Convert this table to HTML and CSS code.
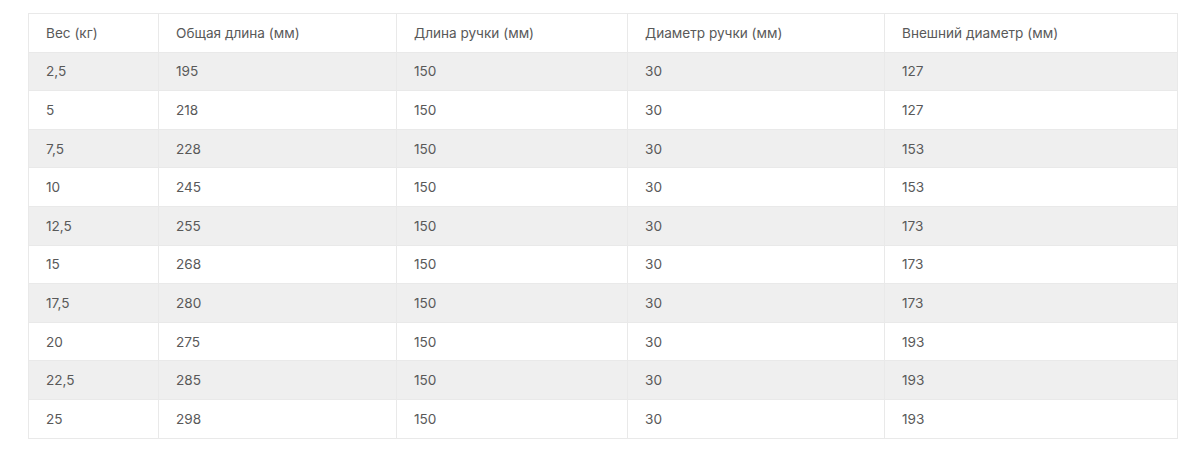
FILE: index.html
```html
<!DOCTYPE html>
<html lang="ru">
<head>
<meta charset="utf-8">
<link rel="stylesheet" href="styles.css">
</head>
<body>
<div class="wrap">
<table class="spec">
<colgroup>
<col class="c1"><col class="c2"><col class="c3"><col class="c4"><col class="c5">
</colgroup>
<thead>
<tr><td>Вес (кг)</td><td>Общая длина (мм)</td><td>Длина ручки (мм)</td><td>Диаметр ручки (мм)</td><td>Внешний диаметр (мм)</td></tr>
</thead>
<tbody>
<tr><td>2,5</td><td>195</td><td>150</td><td>30</td><td>127</td></tr>
<tr><td>5</td><td>218</td><td>150</td><td>30</td><td>127</td></tr>
<tr><td>7,5</td><td>228</td><td>150</td><td>30</td><td>153</td></tr>
<tr><td>10</td><td>245</td><td>150</td><td>30</td><td>153</td></tr>
<tr><td>12,5</td><td>255</td><td>150</td><td>30</td><td>173</td></tr>
<tr><td>15</td><td>268</td><td>150</td><td>30</td><td>173</td></tr>
<tr><td>17,5</td><td>280</td><td>150</td><td>30</td><td>173</td></tr>
<tr><td>20</td><td>275</td><td>150</td><td>30</td><td>193</td></tr>
<tr><td>22,5</td><td>285</td><td>150</td><td>30</td><td>193</td></tr>
<tr><td>25</td><td>298</td><td>150</td><td>30</td><td>193</td></tr>
</tbody>
</table>
</div>
</body>
</html>
```
FILE: styles.css
```css
html, body {
  margin: 0;
  padding: 0;
  background: #ffffff;
}
body {
  font-family: Inter, "Noto Sans", "Liberation Sans", sans-serif;
  color: #595959;
}
.wrap {
  padding: 13px 23px 0 28px;
}
.spec {
  width: 1149px;
  border-collapse: collapse;
  table-layout: fixed;
  font-size: 13.6px;
}
.c1 { width: 130px; }
.c2 { width: 238px; }
.c3 { width: 231px; }
.c4 { width: 257px; }
.c5 { width: 293px; }
.spec tr {
  height: 38.6px;
}
.spec td {
  border: 1px solid #e9e9e9;
  padding: 0 17px;
  line-height: 16px;
  vertical-align: middle;
}
.spec tbody tr:nth-child(odd) td {
  background: #efefef;
}
```
